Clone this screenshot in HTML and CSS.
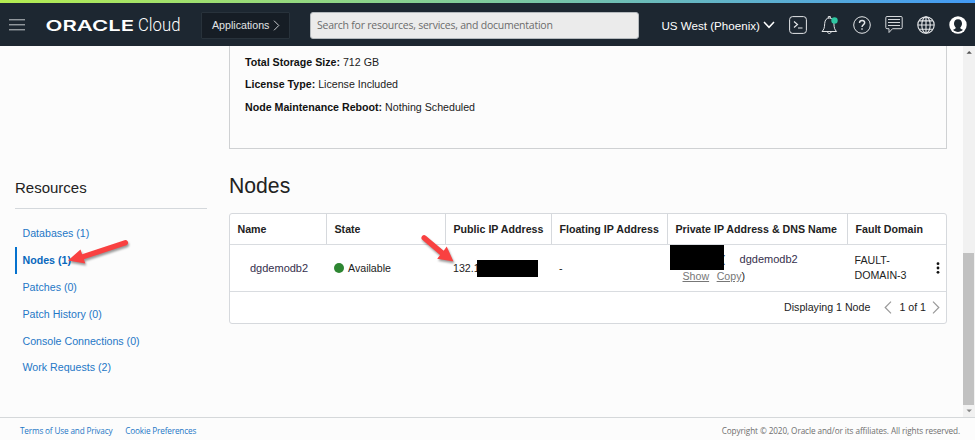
FILE: index.html
```html
<!DOCTYPE html>
<html lang="en">
<head>
<meta charset="utf-8">
<title>Oracle Cloud - Nodes</title>
<link rel="stylesheet" href="styles.css">
</head>
<body>
<header class="topbar">
  <svg class="menu" width="16" height="12" viewBox="0 0 16 12" stroke="#c4c8cb" stroke-width="1"><path d="M0 .8h16M0 5.8h16M0 10.8h16"/></svg>
  <svg class="logo" width="138" height="20" viewBox="0 0 138 20" fill="#fff">
    <text class="logo-brand" x="-.5" y="16" textLength="88.500" lengthAdjust="spacingAndGlyphs">ORACLE</text>
    <text class="logo-cloud" x="92" y="16" textLength="42.500" lengthAdjust="spacingAndGlyphs">Cloud</text>
  </svg>
  <button class="apps"><span>Applications</span><svg width="7" height="11" viewBox="0 0 7 11" fill="none" stroke="#c9cccf"><path d="M1 .7l4.8 4.8L1 10.3"/></svg></button>
  <div class="search"><span>Search for resources, services, and documentation</span></div>
  <div class="region"><span>US West (Phoenix)</span><svg width="12" height="8" viewBox="0 0 12 8" fill="none" stroke="#fff" stroke-width="1.5"><path d="M1 1l5 5.3L11 1"/></svg></div>
  <nav class="tools">
    <svg width="18" height="18" viewBox="0 0 18 18" fill="none" stroke="#e4e6e8"><rect x=".6" y=".6" width="16.8" height="16.8" rx="3"/><path d="M5 5.5l3.500 3L5 11.5M9 12h4.500" stroke-width="1.200"/></svg>
    <svg width="18" height="20" viewBox="0 0 18 20" fill="none" stroke="#e4e6e8"><path d="M1 16.5c2-2 2.500-3.500 2.700-8C3.900 5 5.500 3 8.300 3s4.400 2 4.600 5.500c.2 4.500.7 6 2.700 8zM7.300 3V1.500h2V3M6.500 16.700c.2 2.400 3.400 2.400 3.600 0"/><circle cx="13.500" cy="5.500" r="3.200" fill="#2ec7a2" stroke="none"/></svg>
    <svg width="18" height="18" viewBox="0 0 18 18" fill="none" stroke="#e4e6e8"><circle cx="9" cy="9" r="8.300"/><path d="M6.500 7c0-3.500 5.200-3.300 5.200-.2C11.700 8.700 9 8.600 9 11M9 12.300v1.400" stroke-width="1.400"/></svg>
    <svg width="18" height="18" viewBox="0 0 18 18" fill="none" stroke="#d4d7da"><path d="M2 .5h14q1.200 0 1.200 1.200v9.800q0 1.200-1.200 1.200H7.500L4 16.500v-3.800H2q-1.200 0-1.200-1.200V1.700Q.8.500 2 .5z"/><path d="M3 3.500h12M3 6.500h12M3 9.500h12" stroke-width="1.200"/></svg>
    <svg width="18" height="18" viewBox="0 0 18 18" fill="none" stroke="#e4e6e8" stroke-width="1.150"><circle cx="9" cy="9" r="8.200"/><ellipse cx="9" cy="9" rx="4.200" ry="8.200"/><path d="M9 1v16M1 9h16M2.300 4.800h13.400M2.300 13.200h13.400"/></svg>
    <svg width="18" height="18" viewBox="0 0 18 18"><circle cx="9" cy="9" r="8.700" fill="#fff"/><path d="M9 3.300c2.700 0 4 2 4 4.300 0 1.700-.7 3.200-1.800 4.100.2 1 1.600 1.500 2.800 2.100-2.600 2.800-7.400 2.800-10 0 1.200-.6 2.600-1.100 2.800-2.100C5.700 10.800 5 9.300 5 7.600c0-2.300 1.300-4.300 4-4.300z" fill="#1d2730"/></svg>
  </nav>
</header>

<div class="body">
  <aside class="sidebar">
    <h2>Resources</h2>
    <ul>
      <li><a>Databases (1)</a></li>
      <li class="active"><a>Nodes (1)</a></li>
      <li><a>Patches (0)</a></li>
      <li><a>Patch History (0)</a></li>
      <li><a>Console Connections (0)</a></li>
      <li><a>Work Requests (2)</a></li>
    </ul>
  </aside>
  <main>
    <section class="details">
      <p><b>Total Storage Size:</b> 712 GB</p>
      <p><b>License Type:</b> License Included</p>
      <p><b>Node Maintenance Reboot:</b> Nothing Scheduled</p>
    </section>
    <h1>Nodes</h1>
    <section class="table">
      <div class="row head">
        <div>Name</div><div>State</div><div>Public IP Address</div><div>Floating IP Address</div><div>Private IP Address &amp; DNS Name</div><div>Fault Domain</div>
      </div>
      <div class="row data">
        <div class="name">dgdemodb2</div>
        <div class="state"><i class="dot"></i>Available</div>
        <div class="public">132.1<i class="mask mask-public"></i></div>
        <div>-</div>
        <div class="private">
          <div class="line"><i class="mask mask-private"></i><span class="paren">(</span><span class="dns">dgdemodb2</span></div>
          <div class="links"><a>Show</a><a>Copy</a>)</div>
        </div>
        <div class="fault"><span>FAULT-<br>DOMAIN-3</span><svg width="4" height="12" viewBox="0 0 4 12" fill="#111"><circle cx="2" cy="1.700" r="1.400"/><circle cx="2" cy="6" r="1.400"/><circle cx="2" cy="10.300" r="1.400"/></svg></div>
      </div>
      <div class="pager">
        <span>Displaying 1 Node</span>
        <svg width="8" height="13" viewBox="0 0 8 13" fill="none" stroke="#999" stroke-width="1.200"><path d="M7 .7L1.200 6.500 7 12.300"/></svg>
        <span class="page">1 of 1</span>
        <svg width="8" height="13" viewBox="0 0 8 13" fill="none" stroke="#999" stroke-width="1.200"><path d="M1 .7l5.800 5.800L1 12.300"/></svg>
      </div>
    </section>
  </main>
  <div class="scroll">
    <svg width="12" height="12" viewBox="0 0 12 12"><path d="M3.500 7.800L6.200 5l2.700 2.800z" fill="#555"/></svg>
    <div class="thumb"></div>
    <svg width="12" height="12" viewBox="0 0 12 12"><path d="M3.500 4.500h5.400L6.200 7.300z" fill="#888"/></svg>
  </div>
</div>

<footer>
  <a>Terms of Use and Privacy</a><a class="cookie">Cookie Preferences</a>
  <span class="copyright">Copyright © 2020, Oracle and/or its affiliates. All rights reserved.</span>
</footer>

<svg class="arrows" width="975" height="440" viewBox="0 0 975 440">
  <g fill="#f94141">
    <path d="M68 260.500L80.500 249.500 82.100 254.300 124.500 240.200A2.600 2.600 0 0 1 126.300 245.200L83.900 259.300 85.300 263.500z"/>
    <path d="M453.500 261.500L437.200 258.700 440.100 255 422.300 239.800A2.700 2.700 0 0 1 425.800 235.700L443.700 250.800 446.700 246.500z"/>
  </g>
</svg>
</body>
</html>
```

FILE: styles.css
```css
* { box-sizing: border-box; }
body {
  margin: 0;
  width: 975px;
  height: 440px;
  overflow: hidden;
  position: relative;
  display: flex;
  flex-direction: column;
  background: #fcfcfc;
  color: #222;
  font: 10.65px/15px "Liberation Sans", Arial, sans-serif;
}
h1, h2, p, ul { margin: 0; padding: 0; font-weight: 400; }
svg { display: block; flex: none; }

.topbar {
  height: 46px;
  flex: none;
  display: flex;
  align-items: center;
  padding: 4px 0 0 9px;
  background: linear-gradient(90deg, #b4ec51, #7fcb9d 50%, #429af5) top / 100% 3px no-repeat, #1d2731;
  color: #fff;
}
.logo { margin-left: 21px; overflow: visible; }
.logo-brand { font: 600 15px Inter, "Liberation Sans", sans-serif; }
.logo-cloud { font: 300 17.5px Roboto, "Liberation Sans", sans-serif; }
.apps {
  width: 89px;
  height: 27px;
  margin-left: 17px;
  padding: 0 0 0 10px;
  display: flex;
  align-items: center;
  gap: 4px;
  background: #161d25;
  border: 1px solid #28323b;
  border-radius: 1px;
  color: #e2e4e6;
  font: inherit;
}
.search {
  width: 329px;
  height: 27px;
  margin-left: 20px;
  padding-left: 6px;
  display: flex;
  align-items: center;
  background: #ebebeb;
  border: 1px solid #b4b9bd;
  border-radius: 3px;
  color: #6c6c6c;
  font: 10.5px "Open Sans", sans-serif;
  letter-spacing: -.24px;
  white-space: nowrap;
}
.region {
  width: 127.500px;
  margin-left: 22.500px;
  display: flex;
  align-items: center;
  gap: 3px;
  font-size: 11.6px;
  white-space: nowrap;
}
.tools { display: flex; align-items: center; gap: 14px; }

.body { height: 371px; flex: none; display: flex; }
.sidebar { width: 192px; margin-left: 15px; padding-top: 131px; }
.sidebar h2 {
  height: 32px;
  border-bottom: 1px solid #d4d8dc;
  font-size: 15px;
  line-height: 21px;
}
.sidebar ul { list-style: none; padding-top: 11px; }
.sidebar li {
  height: 26.9px;
  padding-left: 7.5px;
  line-height: 26px;
}
.sidebar a { color: #2477c6; }
.sidebar .active { padding-left: 5.5px; border-left: 2px solid #0572ce; font-weight: 700; }
.sidebar .active a { color: #0868bd; }

main { width: 718px; margin-left: 22px; }
.details {
  height: 103px;
  padding: 8px 0 0 15px;
  border: 1px solid #cfd1d3;
  border-top: 0;
}
.details p { height: 22.3px; line-height: 17px; }
.details b { color: #111; }
h1 { height: 64px; padding-top: 24px; font-size: 21.2px; line-height: 26px; }

.table { height: 111px; background: #fff; border: 1px solid #d6d9dd; border-radius: 3px; }
.row { display: grid; grid-template-columns: 96px 119px 106px 116px 180px 99px; border-bottom: 1px solid #d9dce0; }
.row > div { padding-left: 7.500px; min-width: 0; white-space: nowrap; }
.head { height: 31px; font-weight: 700; line-height: 30px; }
.head > div + div { border-left: 1px solid #d6d9dd; }
.data { height: 47px; line-height: 46px; }
.data > div { padding-left: 8px; }
.row .name { padding-left: 20px; color: #352f4d; font-size: 11px; }
.row .state { display: flex; align-items: center; gap: 4px; padding-left: 8px; }
.public, .private { position: relative; }
.dot { width: 10px; height: 10px; border-radius: 50%; background: #2d8632; }
.mask { position: absolute; background: #000; }
.mask-public { left: 32px; top: 15px; width: 61px; height: 17px; }
.mask-private { left: 3px; top: 0; width: 53.500px; height: 25px; }
.private .line { height: 24px; line-height: 29px; }
.paren { padding-left: 46.500px; }
.dns { padding-left: 14.500px; color: #352f4d; font-size: 11px; }
.links { display: flex; padding-left: 7.500px; line-height: 15px; }
.links a { color: #777; text-decoration: underline; }
.links a + a { margin-left: 7.500px; }
.row .fault { display: flex; align-items: center; justify-content: space-between; padding-left: 7.500px; padding-right: 6px; line-height: 15px; }
.pager { height: 30px; display: flex; align-items: center; justify-content: flex-end; padding-right: 6px; }
.pager span + svg { margin-left: 14px; }
.pager .page { margin-left: 7px; }
.pager .page + svg { margin-left: 6px; }

.scroll { width: 12px; margin-left: auto; display: flex; flex-direction: column; background: #f1f1f1; }
.thumb { height: 152px; margin: auto 1px 0 0; background: #c1c1c1; }

footer {
  height: 23px;
  flex: none;
  display: flex;
  align-items: center;
  padding: 2px 15px 0 20px;
  border-top: 1px solid #d5d8da;
  font: 8.200px "Open Sans", sans-serif;
  letter-spacing: -.16px;
  white-space: nowrap;
}
footer a { color: #2477c6; }
footer .cookie { margin-left: 13px; }
.copyright { margin-left: auto; color: #6f6f6f; letter-spacing: -.09px; }

.arrows { position: absolute; left: 0; top: 0; pointer-events: none; filter: drop-shadow(1px 2px 1px rgba(0, 0, 0, .4)); }
```
